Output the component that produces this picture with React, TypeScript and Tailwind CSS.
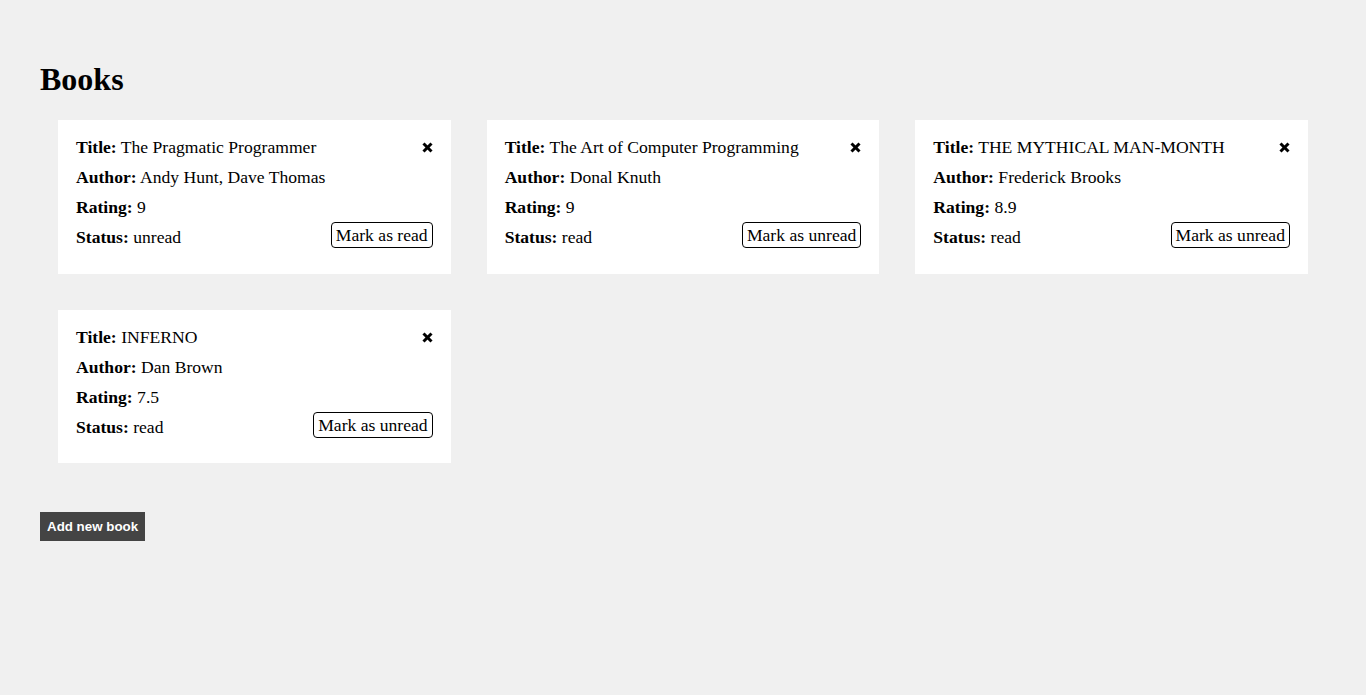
import React from "react";

interface Book {
  title: string;
  author: string;
  rating: string;
  read: boolean;
}

const books: Book[] = [
  { title: "The Pragmatic Programmer", author: "Andy Hunt, Dave Thomas", rating: "9", read: false },
  { title: "The Art of Computer Programming", author: "Donal Knuth", rating: "9", read: true },
  { title: "THE MYTHICAL MAN-MONTH", author: "Frederick Brooks", rating: "8.9", read: true },
  { title: "INFERNO", author: "Dan Brown", rating: "7.5", read: true },
];

const CloseIcon = () => (
  <svg width="11" height="11" viewBox="0 0 11 11" className="mt-[10px]">
    <line x1="1.5" y1="1.5" x2="9.5" y2="9.5" stroke="black" strokeWidth="3" />
    <line x1="9.5" y1="1.5" x2="1.5" y2="9.5" stroke="black" strokeWidth="3" />
  </svg>
);

const BookCard: React.FC<{ book: Book }> = ({ book }) => (
  <div className="bg-white px-[18px] pt-[12px] pb-[21.6px] text-[17.6px] leading-[30px] text-black">
    <div className="flex justify-between items-start">
      <p>
        <b>Title:</b> {book.title}
      </p>
      <CloseIcon />
    </div>
    <p>
      <b>Author:</b> {book.author}
    </p>
    <p>
      <b>Rating:</b> {book.rating}
    </p>
    <div className="flex justify-between items-start">
      <p>
        <b>Status:</b> {book.read ? "read" : "unread"}
      </p>
      <button className="bg-white border border-black rounded-[4px] px-[4px] leading-[24px] text-[17.6px]">
        {book.read ? "Mark as unread" : "Mark as read"}
      </button>
    </div>
  </div>
);

export default function App() {
  return (
    <div
      className="min-h-[695px] bg-[#f0f0f0] px-[40px] pt-[61px]"
      style={{ fontFamily: '"Liberation Serif", "Times New Roman", serif' }}
    >
      <h1 className="text-[32px] leading-[37px] font-bold">Books</h1>
      <div className="mt-[4px] grid grid-cols-3 gap-[36px] p-[18px]">
        {books.map((b) => (
          <BookCard key={b.title} book={b} />
        ))}
      </div>
      <button
        className="mt-[31px] h-[29px] px-[7px] bg-[#444444] text-white font-bold text-[13.33px]"
        style={{ fontFamily: '"Liberation Sans", Arial, sans-serif' }}
      >
        Add new book
      </button>
    </div>
  );
}
